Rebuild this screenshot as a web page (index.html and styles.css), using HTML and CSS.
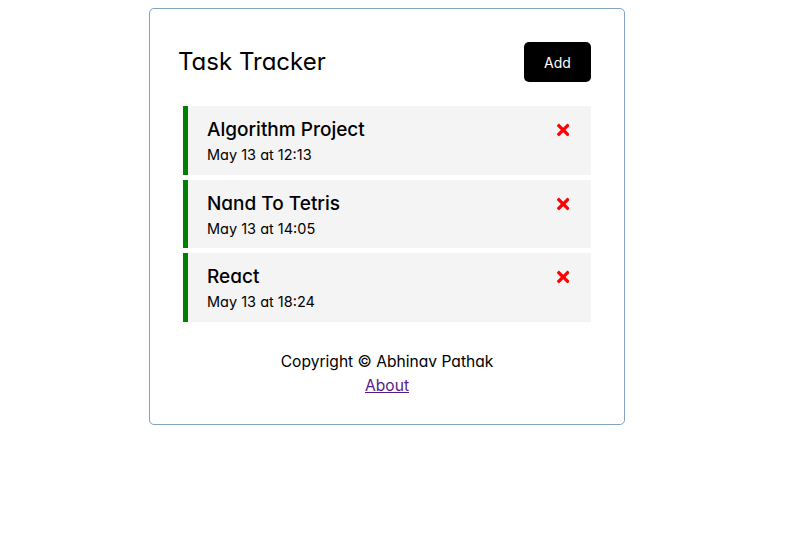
FILE: index.html
```html
<!DOCTYPE html>
<html lang="en">
<head>
<meta charset="utf-8">
<title>Task Tracker</title>
<link rel="stylesheet" href="styles.css">
</head>
<body>
<div class="container">
  <header class="header">
    <h1 class="title">Task Tracker</h1>
    <button class="btn">Add</button>
  </header>
  <div class="tasks">
    <div class="task reminder">
      <h3 class="task-title">Algorithm Project
        <svg class="del" viewBox="0 0 352 512" aria-hidden="true"><path d="M242.72 256l100.07-100.07c12.28-12.28 12.28-32.19 0-44.48l-22.24-22.24c-12.28-12.28-32.19-12.28-44.48 0L176 189.28 75.93 89.21c-12.28-12.28-32.19-12.28-44.48 0L9.21 111.45c-12.28 12.28-12.28 32.19 0 44.48L109.28 256 9.21 356.07c-12.28 12.28-12.28 32.19 0 44.48l22.24 22.24c12.28 12.28 32.2 12.28 44.48 0L176 322.72l100.07 100.07c12.28 12.28 32.2 12.28 44.48 0l22.24-22.24c12.28-12.28 12.28-32.19 0-44.48L242.72 256z"/></svg>
      </h3>
      <p class="task-date">May 13 at 12:13</p>
    </div>
    <div class="task reminder">
      <h3 class="task-title">Nand To Tetris
        <svg class="del" viewBox="0 0 352 512" aria-hidden="true"><path d="M242.72 256l100.07-100.07c12.28-12.28 12.28-32.19 0-44.48l-22.24-22.24c-12.28-12.28-32.19-12.28-44.48 0L176 189.28 75.93 89.21c-12.28-12.28-32.19-12.28-44.48 0L9.21 111.45c-12.28 12.28-12.28 32.19 0 44.48L109.28 256 9.21 356.07c-12.28 12.28-12.28 32.19 0 44.48l22.24 22.24c12.28 12.28 32.2 12.28 44.48 0L176 322.72l100.07 100.07c12.28 12.28 32.2 12.28 44.48 0l22.24-22.24c12.28-12.28 12.28-32.19 0-44.48L242.72 256z"/></svg>
      </h3>
      <p class="task-date">May 13 at 14:05</p>
    </div>
    <div class="task reminder">
      <h3 class="task-title">React
        <svg class="del" viewBox="0 0 352 512" aria-hidden="true"><path d="M242.72 256l100.07-100.07c12.28-12.28 12.28-32.19 0-44.48l-22.24-22.24c-12.28-12.28-32.19-12.28-44.48 0L176 189.28 75.93 89.21c-12.28-12.28-32.19-12.28-44.48 0L9.21 111.45c-12.28 12.28-12.28 32.19 0 44.48L109.28 256 9.21 356.07c-12.28 12.28-12.28 32.19 0 44.48l22.24 22.24c12.28 12.28 32.2 12.28 44.48 0L176 322.72l100.07 100.07c12.28 12.28 32.2 12.28 44.48 0l22.24-22.24c12.28-12.28 12.28-32.19 0-44.48L242.72 256z"/></svg>
      </h3>
      <p class="task-date">May 13 at 18:24</p>
    </div>
  </div>
  <footer class="footer">
    <p class="copy">Copyright © Abhinav Pathak</p>
    <a class="about" href="#about">About</a>
  </footer>
</div>
</body>
</html>
```
FILE: styles.css
```css
* { box-sizing: border-box; }

body {
  margin: 0;
  font-family: Inter, "Open Sans", "Liberation Sans", sans-serif;
  font-feature-settings: "cv11";
  color: #000;
  background: #fff;
}

.container {
  width: 476px;
  margin: 8px 0 0 149px;
  border: 1px solid #82a3c2;
  border-radius: 5px;
  padding: 28px 28px 26px;
}

.header {
  display: flex;
  justify-content: space-between;
  align-items: center;
  height: 50px;
}

.title {
  margin: 0;
  font-size: 24px;
  font-weight: 400;
  line-height: 34px;
}

.btn {
  width: 67px;
  height: 40px;
  margin: 5px;
  border: none;
  border-radius: 5px;
  background: #000;
  color: #fff;
  font-family: inherit;
  font-size: 14px;
  padding: 0;
}

.tasks {
  display: flex;
  flex-direction: column;
  gap: 5px;
  margin-top: 19px;
}

.task {
  margin: 0 5px;
  background: #f4f4f4;
  padding: 10px 22px 9.5px 19px;
  height: 68.5px;
}

.task.reminder {
  border-left: 5px solid green;
}

.task-title {
  display: flex;
  justify-content: space-between;
  align-items: center;
  margin: 0;
  font-size: 19px;
  font-weight: 500;
  line-height: 28px;
}

.del {
  width: 12.4px;
  height: 18px;
  fill: red;
}

.task-date {
  margin: 0;
  font-size: 14.5px;
  line-height: 21px;
}

.footer {
  margin-top: 28px;
  text-align: center;
  font-size: 15.6px;
  line-height: 24px;
}

.copy {
  margin: 0;
}

.about {
  color: #551a8b;
}
```
